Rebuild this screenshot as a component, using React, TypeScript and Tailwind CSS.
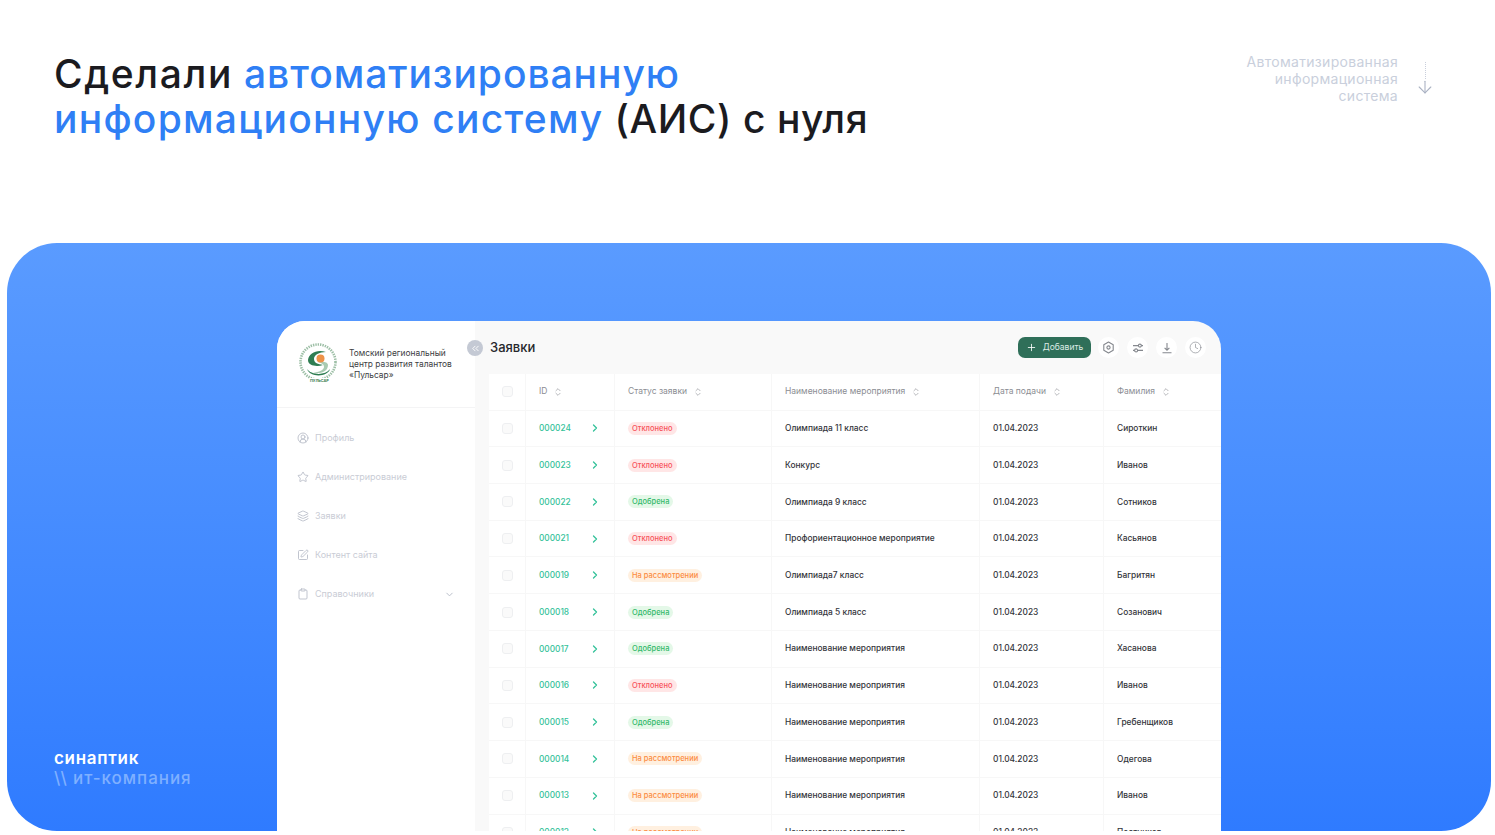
import { ChevronDown, ChevronRight, ChevronsLeft, ChevronsUpDown, Clock, Clipboard, Layers, Plus, SquarePen, Star, CircleUserRound, ArrowDown } from "lucide-react";

type Status = "no" | "ok" | "wait";

const rows: [string, Status, string, string][] = [
  ["000024", "no", "Олимпиада 11 класс", "Сироткин"],
  ["000023", "no", "Конкурс", "Иванов"],
  ["000022", "ok", "Олимпиада 9 класс", "Сотников"],
  ["000021", "no", "Профориентационное мероприятие", "Касьянов"],
  ["000019", "wait", "Олимпиада7 класс", "Багритян"],
  ["000018", "ok", "Олимпиада 5 класс", "Созанович"],
  ["000017", "ok", "Наименование мероприятия", "Хасанова"],
  ["000016", "no", "Наименование мероприятия", "Иванов"],
  ["000015", "ok", "Наименование мероприятия", "Гребенщиков"],
  ["000014", "wait", "Наименование мероприятия", "Одегова"],
  ["000013", "wait", "Наименование мероприятия", "Иванов"],
  ["000012", "wait", "Наименование мероприятия", "Постников"],
];

const badge = {
  no: { text: "Отклонено", cls: "bg-[#ffe6e6] text-[#f7545c]" },
  ok: { text: "Одобрена", cls: "bg-[#e4f8e8] text-[#35b86b]" },
  wait: { text: "На рассмотрении", cls: "bg-[#fff0e0] text-[#fb8c42]" },
};

const menu = [
  { icon: CircleUserRound, label: "Профиль" },
  { icon: Star, label: "Администрирование" },
  { icon: Layers, label: "Заявки" },
  { icon: SquarePen, label: "Контент сайта" },
  { icon: Clipboard, label: "Справочники" },
];

const cols = "grid grid-cols-[37px_89px_157px_208px_124px_117px]";

const Box = () => <div className="w-[11px] h-[11px] rounded-[3px] border border-[#eeeff1] bg-[#fafafa]" />;

const Head = ({ label }: { label: string }) => (
  <div className="flex items-center gap-[6px] border-r border-[#f7f7f7] pl-[13px] text-[8.5px] text-[#8b8d93]">
    {label}
    <ChevronsUpDown size={10} strokeWidth={1.5} />
  </div>
);

const Logo = () => (
  <div className="relative w-[42px] h-[42px] shrink-0">
    <svg width="42" height="42" viewBox="0 0 42 42" fill="none">
      <circle cx="21" cy="19" r="17.5" stroke="#9dbfa6" strokeWidth="2.6" strokeDasharray="1.4 1" />
      <path d="M11 17c1-7 9-11 18-8-7 0-12 3-12 7 0 4 4 5 9 6-6 2-15 1-15-5z" fill="#2f7d52" />
      <path d="M31 22c0 6-6 9-15 8 6-1 11-3 11-6 0-3-3-4-6-5 5-1 10 0 10 3z" fill="#a9cbb2" />
      <circle cx="23.5" cy="15.5" r="4" fill="#ee9248" />
      <path d="M10 26c4 6 18 7 23 0-2 8-20 9-23 0z" fill="#2f7d52" />
    </svg>
    <span className="absolute left-[12px] top-[35px] bg-white px-[1px] text-[3.8px] font-bold leading-[5px] text-[#3b7d52]">ПУЛЬСАР</span>
  </div>
);

const Action = ({ children }: { children: React.ReactNode }) => (
  <div className="flex w-[21px] h-[21px] items-center justify-center rounded-full bg-white text-[#85888e]">{children}</div>
);

export default function App() {
  return (
    <div className="w-[1495px] h-[835px] overflow-hidden bg-white font-['Inter',sans-serif]">
      <header className="flex justify-between h-[243px] pl-[54px] pr-[60px] pt-[51px]">
        <h1 className="text-[39px] leading-[45px] font-medium tracking-[0.6px] text-[#1b1b1f]">
          <span className="tracking-[1.6px]">Сделали</span> <span className="tracking-[0.95px] text-[#2f7ff5]">автоматизированную</span>
          <br />
          <span className="tracking-[1.25px] text-[#2f7ff5]">информационную систему</span> (АИС) с нуля
        </h1>
        <div className="flex gap-[17px] pt-[2px]">
          <p className="text-right text-[14px] leading-[17px] tracking-[0.3px] text-[#c9cfdc]">
            Автоматизированная
            <br />
            информационная
            <br />
            система
          </p>
          <div className="flex flex-col items-center pt-[9px]">
            <div className="h-[17px] border-l border-dotted border-[#c9cfdc]" />
            <ArrowDown size={20} strokeWidth={1.3} className="-mt-[2px] text-[#aab2c3]" />
          </div>
        </div>
      </header>

      <section className="flex ml-[7px] w-[1484px] h-[588px] overflow-hidden rounded-[50px] bg-gradient-to-b from-[#5a9bff] to-[#2f7bff]">
        <div className="flex w-[270px] shrink-0 flex-col justify-end pl-[47px] pb-[43px]">
          <p className="text-[17px] leading-[20px] font-semibold tracking-[0.7px] text-white">синаптик</p>
          <p className="text-[17px] leading-[20px] font-medium tracking-[0.95px] text-[#7fb0ff]">\\ ит-компания</p>
        </div>

        <div className="mt-[78px] flex w-[944px] h-[510px] shrink-0 overflow-hidden rounded-t-[28px] bg-[#f9f9f9]">
          <aside className="relative w-[198px] shrink-0 bg-white">
            <div className="flex h-[87px] items-center gap-[10px] border-b border-[#f4f4f5] pl-[20px]">
              <Logo />
              <p className="text-[8.4px] leading-[11px] text-[#3c3d42]">
                Томский региональный
                <br />
                центр развития талантов
                <br />
                «Пульсар»
              </p>
            </div>
            <nav className="flex flex-col gap-[23px] px-[20px] pt-[22px]">
              {menu.map((m) => (
                <div key={m.label} className="flex h-[16px] items-center gap-[6px] text-[9px] text-[#c9ccd5]">
                  <m.icon size={12} strokeWidth={1.7} className="text-[#b6bac6]" />
                  <span className="flex-1">{m.label}</span>
                  {m.label === "Справочники" && <ChevronDown size={11} strokeWidth={2} className="text-[#b6bac6]" />}
                </div>
              ))}
            </nav>
            <div className="absolute right-[-8px] top-[19px] flex w-[16px] h-[16px] items-center justify-center rounded-full bg-[#c4c9d4] text-white">
              <ChevronsLeft size={11} strokeWidth={2} />
            </div>
          </aside>

          <main className="flex-1 min-w-0">
            <div className="flex h-[53px] items-center px-[15px]">
              <h2 className="flex-1 text-[13px] font-medium text-[#26272b]">Заявки</h2>
              <div className="flex h-[21px] w-[73px] items-center justify-center gap-[6px] rounded-[7px] bg-[#2f6f59] text-[8.5px] text-[#dcebe5]">
                <Plus size={11} strokeWidth={1.8} className="text-white" />
                Добавить
              </div>
              <div className="ml-[7px] flex gap-[8px]">
                <Action>
                  <svg width="13" height="13" viewBox="0 0 13 13" fill="none" stroke="currentColor" strokeWidth="1.1">
                    <path d="M6.5 1 11.2 3.7v5.6L6.5 12 1.8 9.3V3.7z" strokeLinejoin="round" />
                    <circle cx="6.5" cy="6.5" r="1.6" />
                  </svg>
                </Action>
                <Action>
                  <svg width="12" height="12" viewBox="0 0 12 12" fill="none" stroke="currentColor" strokeWidth="1.1">
                    <path d="M1 3.6h5.4M9.4 3.6H11M1 8.4h1.6M5.6 8.4H11" />
                    <circle cx="7.9" cy="3.6" r="1.5" />
                    <circle cx="4.1" cy="8.4" r="1.5" />
                  </svg>
                </Action>
                <Action>
                  <svg width="12" height="12" viewBox="0 0 12 12" fill="none" stroke="currentColor" strokeWidth="1.1">
                    <path d="M6 1v7M3.6 5.8 6 8.2l2.4-2.4M1.5 10.8h9" />
                  </svg>
                </Action>
                <Action><Clock size={13} strokeWidth={1.2} /></Action>
              </div>
            </div>
            <div className="ml-[14px] bg-white">
              <div className={`${cols} h-[36.6px] border-b border-[#f7f7f7]`}>
                <div className="flex items-center justify-center border-r border-[#f7f7f7]"><Box /></div>
                <Head label="ID" />
                <Head label="Статус заявки" />
                <Head label="Наименование мероприятия" />
                <Head label="Дата подачи" />
                <div className="flex items-center gap-[6px] pl-[13px] text-[8.5px] text-[#8b8d93]">
                  Фамилия
                  <ChevronsUpDown size={10} strokeWidth={1.5} />
                </div>
              </div>
              {rows.map((r) => (
                <div key={r[0]} className={`${cols} h-[36.72px] border-b border-[#f7f7f7] text-[8.4px] font-medium text-[#33343a]`}>
                  <div className="flex items-center justify-center border-r border-[#f7f7f7]"><Box /></div>
                  <div className="flex items-center justify-between border-r border-[#f7f7f7] pl-[13px] pr-[13px] text-[8.3px] text-[#35c29a]">
                    {r[0]}
                    <ChevronRight size={12} strokeWidth={2.6} />
                  </div>
                  <div className="flex items-center border-r border-[#f7f7f7] pl-[13px]">
                    <span className={`rounded-full px-[4px] py-[1px] text-[7.5px] leading-[11px] ${badge[r[1]].cls}`}>{badge[r[1]].text}</span>
                  </div>
                  <div className="flex items-center border-r border-[#f7f7f7] pl-[13px]">{r[2]}</div>
                  <div className="flex items-center border-r border-[#f7f7f7] pl-[13px]">01.04.2023</div>
                  <div className="flex items-center pl-[13px]">{r[3]}</div>
                </div>
              ))}
            </div>
          </main>
        </div>
      </section>
    </div>
  );
}
